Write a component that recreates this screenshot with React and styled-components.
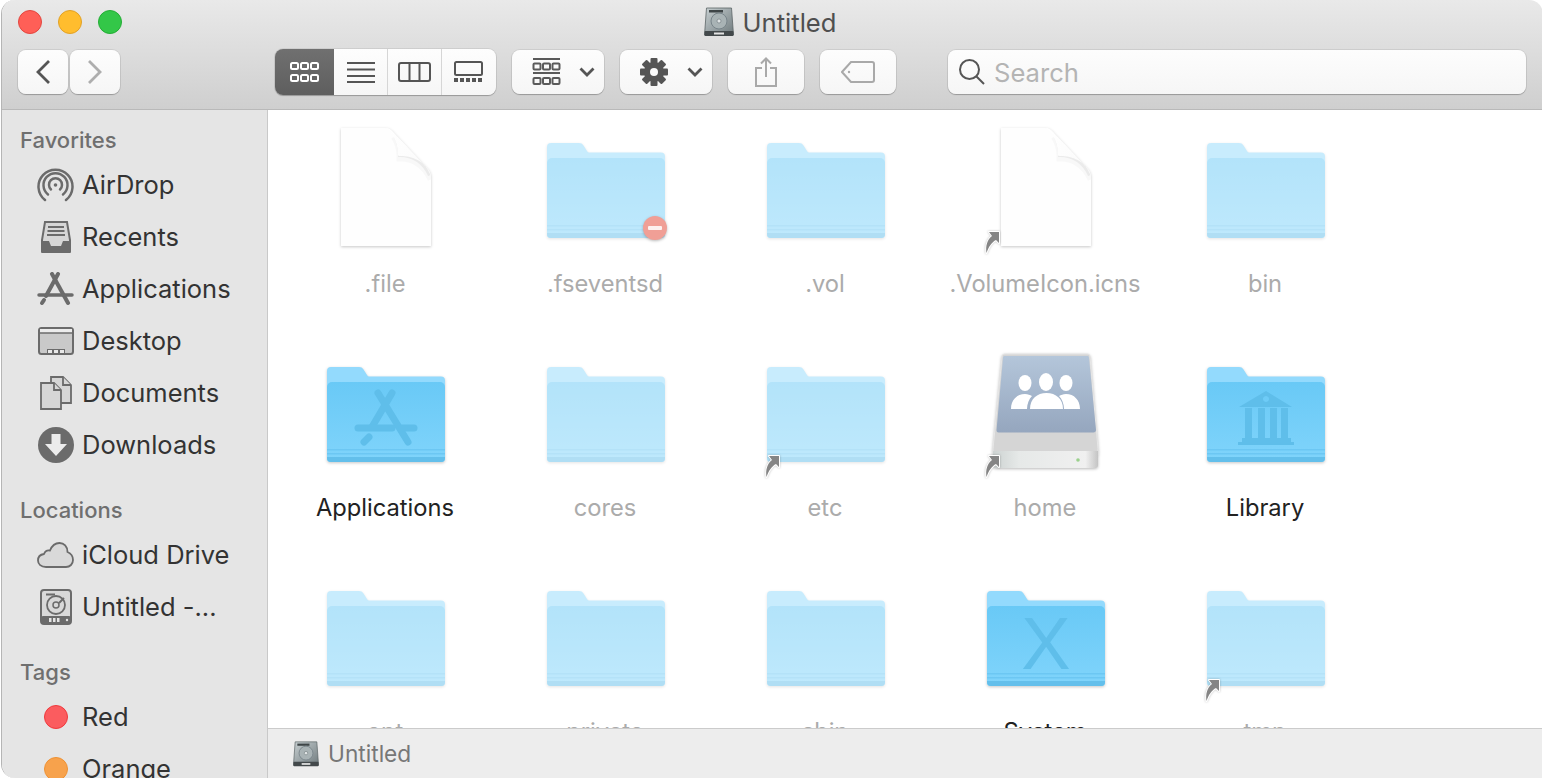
import styled, { createGlobalStyle } from "styled-components";

const GlobalStyle = createGlobalStyle`
  html, body {
    margin: 0;
    padding: 0;
    height: 100%;
    background: #fff;
    overflow: hidden;
    font-family: Inter, "Liberation Sans", sans-serif;
  }
`;

const FinderWindow = styled.div`
  box-sizing: border-box;
  width: 1542px;
  height: 778px;
  margin-left: 1px;
  display: flex;
  flex-direction: column;
  overflow: hidden;
  border-radius: 14px 14px 0 14px;
  border-left: 1px solid #b5b5b5;
  background: #fff;
`;

const Toolbar = styled.header`
  flex: none;
  height: 110px;
  box-sizing: border-box;
  border-bottom: 1px solid #b9b9b9;
  background: linear-gradient(#e9e9e9, #cfcfcf);
  display: flex;
  flex-direction: column;
`;

const TitleRow = styled.div`
  height: 44px;
  margin-bottom: 5px;
  display: flex;
  align-items: center;
  padding-left: 16px;
`;

const Lights = styled.div`
  display: flex;
  gap: 16px;
  width: 104px;
`;

const Light = styled.span`
  width: 22px;
  height: 22px;
  border-radius: 50%;
  background: ${(p) => p.$color};
  border: 1px solid ${(p) => p.$edge};
`;

const Title = styled.div`
  flex: 1;
  display: flex;
  align-items: center;
  justify-content: center;
  gap: 9px;
  padding-right: 125px;
  font-size: 25.6px;
  color: #4f4f4f;
`;

const ToolRow = styled.div`
  height: 46px;
  display: flex;
  align-items: center;
  padding-left: 16px;
`;

const ToolButton = styled.div`
  box-sizing: border-box;
  height: 44px;
  width: ${(p) => p.$width}px;
  margin-left: ${(p) => p.$gap || 0}px;
  padding-left: ${(p) => p.$pad || 0}px;
  display: flex;
  align-items: center;
  justify-content: ${(p) => (p.$pad ? "flex-start" : "center")};
  gap: ${(p) => p.$inner || 0}px;
  background: linear-gradient(#fdfdfd, #f6f6f6);
  border-radius: 8px;
  box-shadow: 0 0 0 1px rgba(0, 0, 0, 0.07), 0 1px 1px rgba(0, 0, 0, 0.22);
`;

const Segments = styled.div`
  display: flex;
  height: 46px;
  margin-left: 155px;
  border-radius: 8px;
  overflow: hidden;
  box-shadow: 0 0 0 1px rgba(0, 0, 0, 0.07), 0 1px 1px rgba(0, 0, 0, 0.22);
`;

const Segment = styled.div`
  box-sizing: border-box;
  width: ${(p) => p.$width}px;
  display: flex;
  align-items: center;
  justify-content: center;
  background: ${(p) =>
    p.$active ? "linear-gradient(#707070, #5e5e5e)" : "linear-gradient(#fdfdfd, #f6f6f6)"};
  border-left: ${(p) => (p.$divider ? "1px solid #d6d6d6" : "none")};
`;

const SearchBox = styled.div`
  box-sizing: border-box;
  width: 578px;
  height: 44px;
  margin-left: 52px;
  padding-left: 10px;
  display: flex;
  align-items: center;
  gap: 8px;
  background: linear-gradient(#fdfdfd, #f6f6f6);
  border-radius: 8px;
  box-shadow: 0 0 0 1px rgba(0, 0, 0, 0.07), 0 1px 1px rgba(0, 0, 0, 0.22);
  font-size: 25.6px;
  color: #b4b4b4;
`;

const Body = styled.div`
  flex: 1;
  min-height: 0;
  display: flex;
`;

const Sidebar = styled.aside`
  flex: none;
  box-sizing: border-box;
  width: 266px;
  padding-top: 11px;
  overflow: hidden;
  background: #e5e5e5;
  border-right: 1px solid #c9c9c9;
`;

const Section = styled.section`
  margin-bottom: 20px;
`;

const Heading = styled.div`
  height: 38px;
  padding-left: 18px;
  display: flex;
  align-items: center;
  font-size: 22px;
  font-weight: 500;
  color: #6f6f6f;
`;

const SideItem = styled.div`
  height: 52px;
  display: flex;
  align-items: center;
  padding-left: 35px;
  gap: 8px;
  font-size: 25.5px;
  color: #333;
  white-space: nowrap;
`;

const SideName = styled.span`
  margin-top: -2px;
`;

const SideIcon = styled.span`
  width: 37px;
  height: 37px;
  flex: none;
  display: flex;
  align-items: center;
  justify-content: center;
`;

const TagDot = styled.span`
  width: 22px;
  height: 22px;
  border-radius: 50%;
  background: ${(p) => p.$color};
  border: 1px solid ${(p) => p.$edge};
`;

const Content = styled.div`
  flex: 1;
  min-width: 0;
  display: flex;
  flex-direction: column;
`;

const Main = styled.main`
  flex: 1;
  min-height: 0;
  overflow: hidden;
  padding: 10px 0 0 7px;
  display: grid;
  grid-template-columns: repeat(5, 220px);
  grid-auto-rows: 224px;
`;

const Cell = styled.div`
  display: flex;
  flex-direction: column;
  align-items: center;
`;

const IconSlot = styled.div`
  position: relative;
  width: 128px;
  height: 128px;
`;

const Label = styled.div`
  margin-top: 21px;
  height: 30px;
  line-height: 30px;
  font-size: 23.7px;
  color: ${(p) => (p.$dim ? "#ababab" : "#222")};
  white-space: nowrap;
`;

const AliasBadge = styled.svg`
  position: absolute;
  left: 2px;
  top: 109px;
  filter: drop-shadow(0 0 1px rgba(0, 0, 0, 0.25));
`;

const StopBadge = styled.div`
  position: absolute;
  left: 102px;
  top: 96px;
  width: 24px;
  height: 24px;
  border-radius: 50%;
  background: #f09f96;
  box-shadow: 0 1px 3px rgba(0, 0, 0, 0.25);
  display: flex;
  align-items: center;
  justify-content: center;

  &::after {
    content: "";
    width: 14px;
    height: 4px;
    background: #fdf1ef;
    border-radius: 1px;
  }
`;

const StatusBar = styled.footer`
  flex: none;
  height: 50px;
  box-sizing: border-box;
  border-top: 1px solid #cbcbcb;
  background: #ededed;
  display: flex;
  align-items: center;
  gap: 9px;
  padding: 0 0 0 25px;
  font-size: 22.7px;
  color: #777;
`;

const stroke = "#6b6b6b";

const DiskIcon = ({ size = 30, id = "disk-top" }) => (
  <svg width={size} height={size} viewBox="0 0 30 30">
    <defs>
      <linearGradient id={id} x1="0" y1="0" x2="1" y2="1">
        <stop offset="0" stopColor="#c8d0d2" />
        <stop offset="1" stopColor="#6f7a7d" />
      </linearGradient>
    </defs>
    <path d="M2.500 1h25l2 27H.500z" fill={`url(#${id})`} stroke="#5c6466" strokeWidth="0.8" />
    <rect x="5" y="3" width="14" height="2.500" fill="#3e4547" />
    <circle cx="15" cy="14" r="8" fill="#a9b3b5" stroke="#78848a" />
    <circle cx="15" cy="14" r="2" fill="#e0e4e5" stroke="#6c7578" strokeWidth="0.6" />
    <rect x="0.500" y="24" width="29" height="5" rx="1" fill="#43494b" />
    <rect x="10" y="25.500" width="10" height="2" fill="#e3e3e3" />
  </svg>
);

const ViewIcon = ({ color }) => (
  <svg width="30" height="22" viewBox="0 0 30 22" fill="none" stroke={color} strokeWidth="2">
    {[1, 11, 21].map((x) =>
      [2, 14].map((y) => <rect key={`${x}-${y}`} x={x} y={y} width="7" height="6" rx="1.500" />)
    )}
  </svg>
);

const ListIcon = () => (
  <svg width="30" height="22" viewBox="0 0 30 22" fill="none" stroke="#555" strokeWidth="2">
    <path d="M1 2h28M1 8.500h28M1 15h28M1 21h28" />
  </svg>
);

const ColumnsIcon = () => (
  <svg width="34" height="22" viewBox="0 0 34 22" fill="none" stroke="#555" strokeWidth="2">
    <rect x="1" y="2" width="31" height="18" rx="2" />
    <path d="M11.500 2v18M21.500 2v18" />
  </svg>
);

const GalleryIcon = () => (
  <svg width="30" height="22" viewBox="0 0 30 22" fill="none">
    <rect x="1" y="1" width="27" height="13" rx="1.500" stroke="#555" strokeWidth="2" />
    {[0, 6, 12, 18, 24].map((x) => (
      <rect key={x} x={x} y="17" width="4" height="4" fill="#555" />
    ))}
  </svg>
);

const GroupIcon = () => (
  <svg width="29" height="28" viewBox="0 0 29 28" fill="none" stroke="#5a5a5a" strokeWidth="2">
    <path d="M1 1h27M1 15h27" />
    {[1.500, 11, 20.500].map((x) =>
      [5.500, 20].map((y) => <rect key={`${x}-${y}`} x={x} y={y} width="7" height="6" rx="1" />)
    )}
  </svg>
);

const Chevron = () => (
  <svg width="16" height="10" viewBox="0 0 16 10" fill="none" stroke="#555" strokeWidth="2.800">
    <path d="M1.500 1.500 8 8l6.500-6.500" />
  </svg>
);

const GearIcon = () => (
  <svg width="28" height="28" viewBox="0 0 28 28">
    {[0, 45, 90, 135].map((a) => (
      <rect key={a} x="10.500" y="0" width="7" height="28" rx="1" fill="#555" transform={`rotate(${a} 14 14)`} />
    ))}
    <circle cx="14" cy="14" r="10" fill="#555" />
    <circle cx="14" cy="14" r="4" fill="#fafafa" />
  </svg>
);

const ShareIcon = () => (
  <svg width="22" height="30" viewBox="0 0 22 30" fill="none" stroke="#a9a9a9" strokeWidth="2">
    <path d="M7 11H1v18h20V11h-6M11 20V2M6 6.500 11 1.500l5 5" />
  </svg>
);

const TagIcon = () => (
  <svg width="34" height="22" viewBox="0 0 34 22" fill="none" stroke="#a9a9a9" strokeWidth="2">
    <path d="M10 1h21a2 2 0 0 1 2 2v16a2 2 0 0 1-2 2H10L1 11z" />
    <circle cx="8" cy="11" r="1.200" fill="#a9a9a9" stroke="none" />
  </svg>
);

const SearchIcon = () => (
  <svg width="28" height="28" viewBox="0 0 28 28" fill="none" stroke="#555" strokeWidth="2">
    <circle cx="11.500" cy="11.500" r="9.500" />
    <path d="M18.500 18.500 26 26" />
  </svg>
);

const AirDropIcon = () => (
  <svg width="37" height="37" viewBox="0 0 37 37" fill="none" stroke={stroke}>
    <path d="M8 33A17 17 0 1 1 29 33" strokeWidth="2.500" strokeLinecap="round" />
    <path d="M11 27.500A12 12 0 1 1 26 27.500" strokeWidth="2.500" strokeLinecap="round" />
    <path d="M14 22.500A6.500 6.500 0 1 1 23 22.500" strokeWidth="2.500" strokeLinecap="round" />
    <circle cx="18.500" cy="18" r="1.800" fill={stroke} stroke="none" />
  </svg>
);

const RecentsIcon = () => (
  <svg width="32" height="32" viewBox="0 0 32 32">
    <path d="M5 1h22l3 18v11a1.500 1.500 0 0 1-1.500 1.500h-25A1.500 1.500 0 0 1 2 30V19z" fill="#d6d6d6" stroke={stroke} strokeWidth="2" />
    <path d="M8 6h16M7.500 10h17M7 14h18" stroke={stroke} strokeWidth="1.800" />
    <path d="M1 20h8l2 5h10l2-5h8v10a2 2 0 0 1-2 2H3a2 2 0 0 1-2-2z" fill={stroke} />
  </svg>
);

const AppsIcon = () => (
  <svg width="37" height="34" viewBox="0 0 37 34" fill="none" stroke={stroke} strokeLinecap="round">
    <path d="M15 2 31 31" strokeWidth="4" />
    <path d="M21 2 9 24" strokeWidth="4" />
    <path d="M2 23h33" strokeWidth="3.500" />
    <path d="M5 31 7 28" strokeWidth="4" />
  </svg>
);

const DesktopIcon = () => (
  <svg width="36" height="28" viewBox="0 0 36 28">
    <rect x="1" y="1" width="34" height="26" rx="2.500" fill="#c9c9c9" stroke={stroke} strokeWidth="2" />
    <rect x="2" y="2" width="32" height="4" fill="#ececec" />
    <path d="M2 6h32" stroke={stroke} strokeWidth="1.500" />
    <path d="M9 27v-5h18v5z" fill={stroke} />
    {[10, 16, 22].map((x) => (
      <rect key={x} x={x} y="23" width="4" height="3" fill="#e8e8e8" />
    ))}
  </svg>
);

const DocumentsIcon = () => (
  <svg width="32" height="34" viewBox="0 0 32 34" fill="#d6d6d6" stroke={stroke} strokeWidth="1.800">
    <path d="M11 1h12l8 8v18H11z" />
    <path d="M23 1v8h8" />
    <path d="M1 7h13l7 7v19H1z" />
    <path d="M14 7v7h7" />
  </svg>
);

const DownloadsIcon = () => (
  <svg width="36" height="36" viewBox="0 0 36 36">
    <circle cx="18" cy="18" r="18" fill={stroke} />
    <path d="M13.500 7h9v10h6.500L18 29 7 17h6.500z" fill="#ececec" />
  </svg>
);

const CloudIcon = () => (
  <svg width="37" height="26" viewBox="0 0 37 26">
    <path
      d="M9 25C4 25 1 22 1 18.500 1 15 3.500 12.500 7 12 8 9.500 10.500 8 13 8.500 15 3.500 19 1 22.500 1 27 1 30.500 4.500 30.500 10 34 11.500 36 14.500 36 18 36 22 33 25 29 25z"
      fill="#d9d9d9"
      stroke={stroke}
      strokeWidth="1.800"
    />
  </svg>
);

const DriveLineIcon = () => (
  <svg width="32" height="36" viewBox="0 0 32 36">
    <rect x="1" y="1" width="30" height="34" rx="3" fill="#d9d9d9" stroke={stroke} strokeWidth="2" />
    <rect x="6" y="4.500" width="9" height="2" fill={stroke} />
    <circle cx="16" cy="16" r="9" fill="none" stroke={stroke} strokeWidth="1.800" />
    <circle cx="16" cy="16" r="3" fill="none" stroke={stroke} strokeWidth="1.500" />
    <path d="M24 9 19 14" stroke={stroke} strokeWidth="2" />
    <rect x="1" y="27" width="30" height="8" rx="2" fill={stroke} />
    {[9, 13, 17].map((x) => (
      <rect key={x} x={x} y="29" width="2.500" height="4" fill="#e4e4e4" />
    ))}
    <circle cx="27" cy="31" r="1.200" fill="#e4e4e4" />
  </svg>
);

const FolderDefs = () => (
  <svg width="0" height="0" style={{ position: "absolute" }}>
    <defs>
      <linearGradient id="folder-front" x1="0" y1="0" x2="0" y2="1">
        <stop offset="0" stopColor="#69c9f6" />
        <stop offset="1" stopColor="#80d4fb" />
      </linearGradient>
      <linearGradient id="file-fold" x1="0" y1="0" x2="1" y2="1">
        <stop offset="0" stopColor="#ffffff" />
        <stop offset="1" stopColor="#fafafa" />
      </linearGradient>
      <linearGradient id="drive-panel" x1="0" y1="0" x2="0" y2="1">
        <stop offset="0" stopColor="#b4c6da" />
        <stop offset="1" stopColor="#95a6be" />
      </linearGradient>
      <linearGradient id="drive-front" x1="0" y1="0" x2="1" y2="0">
        <stop offset="0" stopColor="#cdd3d2" />
        <stop offset="0.25" stopColor="#e6e9e8" />
        <stop offset="0.88" stopColor="#f0f0f0" />
        <stop offset="1" stopColor="#c4c4c4" />
      </linearGradient>
      <clipPath id="file-page">
        <path d="M20 8h44c3 0 5 1 7 3l34 36c3 3 5 6 5 10v69H20z" />
      </clipPath>
    </defs>
  </svg>
);

const emblemColor = "#5fbeea";

const AppEmblem = () => (
  <g fill="none" stroke={emblemColor} strokeWidth="7" strokeLinecap="round">
    <path d="M57 49 87 98" />
    <path d="M71 49 51 83" />
    <path d="M37 84h34M81 84h12" />
    <path d="M43 98l5-5" />
  </g>
);

const LibraryEmblem = () => (
  <g fill={emblemColor}>
    <path d="M65 47 91 63H38zM65 52a3 3 0 1 0 .01 0" fillRule="evenodd" />
    {[44, 57, 69, 80].map((x) => (
      <rect key={x} x={x} y="64" width="7" height="30" />
    ))}
    <rect x="41" y="94" width="49" height="4" />
    <rect x="37" y="98" width="56" height="3" />
  </g>
);

const SystemEmblem = () => (
  <text x="65" y="101" textAnchor="middle" fontFamily="Liberation Sans, sans-serif" fontSize="74" fill={emblemColor}>
    X
  </text>
);

const Folder = ({ dim, emblem }) => (
  <svg
    width="128"
    height="128"
    viewBox="0 0 128 128"
    opacity={dim ? 0.5 : 1}
    style={{ filter: "drop-shadow(0 1px 1.5px rgba(0,0,0,.22))" }}
  >
    <path
      d="M10 23h28c2 0 3.500.8 4.500 2.500L46 31c.6 1 1.500 1.500 3 1.500h71a4 4 0 0 1 4 4V114a4 4 0 0 1-4 4H10a4 4 0 0 1-4-4V27a4 4 0 0 1 4-4z"
      fill="#93dafd"
    />
    <path d="M11 38h108a5 5 0 0 1 5 5v71a4 4 0 0 1-4 4H10a4 4 0 0 1-4-4V43a5 5 0 0 1 5-5z" fill="url(#folder-front)" />
    <rect x="6" y="105" width="118" height="1.500" fill="#6cc7f3" />
    <rect x="6" y="109" width="118" height="1.500" fill="#6cc7f3" />
    <path d="M6 113h118v1a4 4 0 0 1-4 4H10a4 4 0 0 1-4-4z" fill="#63bfeb" />
    {emblem}
  </svg>
);

const FileIcon = () => (
  <svg width="128" height="128" viewBox="0 0 128 128" style={{ filter: "drop-shadow(0 1px 1.5px rgba(0,0,0,.22))" }}>
    <path d="M20 8h44c3 0 5 1 7 3l34 36c3 3 5 6 5 10v69H20z" fill="#fefefe" />
    <g clipPath="url(#file-page)" fill="none" stroke="#000">
      <path d="M74 16c4 6 6 12 6 21 9 0 23 4 31 22" strokeOpacity="0.025" strokeWidth="9" />
      <path d="M74 16c3 6 4.500 12 4.500 19.500 9 0 22 3 30 20" strokeOpacity="0.05" strokeWidth="3" />
    </g>
    <path d="M65 8c2 0 4 1 6 3l34 36c3 3 5 6 5 10-3-11-12-20-28-21-4 0-5 0-5-1 0-11-4-21-12-27z" fill="url(#file-fold)" />
  </svg>
);

const DriveIcon = () => (
  <svg width="128" height="128" viewBox="0 0 128 128" style={{ filter: "drop-shadow(0 1px 1.5px rgba(0,0,0,.28))" }}>
    <path d="M24 10h82c2 0 3 1 3 3l8 92v6H12v-6l9-92c0-2 1-3 3-3z" fill="#d5d5d5" stroke="#e6e6e6" strokeWidth="1" />
    <path d="M24 12h82c1.500 0 2 .5 2 2l7 72c0 1.500-1 2.500-2.500 2.500h-95C16 88.500 15.500 87.500 15.500 86l6.500-72c0-1.500.5-2 2-2z" fill="url(#drive-panel)" />
    <path d="M12 107h105v13c0 3-1 4-4 4H16c-3 0-4-1-4-4z" fill="url(#drive-front)" />
    <circle cx="97" cy="116" r="1.800" fill="#9bd18d" />
    <g fill="#fff">
      <ellipse cx="44" cy="39" rx="6.500" ry="8" />
      <ellipse cx="85" cy="39" rx="6.500" ry="8" />
      <path d="M30 65c0-9 6-15 14-15 3 0 5 1 7 2-3 3-5 8-5 13z" />
      <path d="M99 65c0-9-6-15-14-15-3 0-5 1-7 2 3 3 5 8 5 13z" />
      <ellipse cx="65" cy="38" rx="7" ry="9" />
      <path d="M49 65c0-10 7-16 16.500-16S82 55 82 65z" />
    </g>
  </svg>
);

const Alias = () => (
  <AliasBadge width="20" height="26" viewBox="0 0 20 26">
    <path
      d="M6 3h10v11l-3-3c-4 2-7 6-9.500 13C2.500 17 4 11 9 7z"
      fill="#858585"
      stroke="#fff"
      strokeWidth="2"
      strokeLinejoin="round"
      paintOrder="stroke"
    />
  </AliasBadge>
);

const favorites = [
  ["AirDrop", <AirDropIcon />],
  ["Recents", <RecentsIcon />],
  ["Applications", <AppsIcon />],
  ["Desktop", <DesktopIcon />],
  ["Documents", <DocumentsIcon />],
  ["Downloads", <DownloadsIcon />],
];

const locations = [
  ["iCloud Drive", <CloudIcon />],
  ["Untitled -...", <DriveLineIcon />],
];

const tags = [
  ["Red", "#fb5c5f", "#f0393d"],
  ["Orange", "#f7a24c", "#ee9133"],
];

const items = [
  { name: ".file", kind: "file" },
  { name: ".fseventsd", stop: true },
  { name: ".vol" },
  { name: ".VolumeIcon.icns", kind: "file", alias: true },
  { name: "bin" },
  { name: "Applications", active: true, emblem: <AppEmblem /> },
  { name: "cores" },
  { name: "etc", alias: true },
  { name: "home", kind: "drive", alias: true },
  { name: "Library", active: true, emblem: <LibraryEmblem /> },
  { name: "opt" },
  { name: "private" },
  { name: "sbin" },
  { name: "System", active: true, emblem: <SystemEmblem /> },
  { name: "tmp", alias: true },
];

const ItemIcon = ({ item }) => {
  if (item.kind === "file") return <FileIcon />;
  if (item.kind === "drive") return <DriveIcon />;
  return <Folder dim={!item.active} emblem={item.emblem} />;
};

export default function App() {
  return (
    <>
      <GlobalStyle />
      <FolderDefs />
      <FinderWindow>
        <Toolbar>
          <TitleRow>
            <Lights>
              <Light $color="#ff5f57" $edge="#e2463f" />
              <Light $color="#ffbd2e" $edge="#e1a126" />
              <Light $color="#33c748" $edge="#24ad35" />
            </Lights>
            <Title>
              <DiskIcon />
              Untitled
            </Title>
          </TitleRow>
          <ToolRow>
            <ToolButton $width={50}>
              <svg width="16" height="26" viewBox="0 0 16 26" fill="none" stroke="#555" strokeWidth="2.800">
                <path d="M14 2 3 13l11 11" />
              </svg>
            </ToolButton>
            <ToolButton $width={50} $gap={2}>
              <svg width="16" height="26" viewBox="0 0 16 26" fill="none" stroke="#aeaeae" strokeWidth="2.800">
                <path d="M2 2l11 11L2 24" />
              </svg>
            </ToolButton>
            <Segments>
              <Segment $width={59} $active>
                <ViewIcon color="#fff" />
              </Segment>
              <Segment $width={53}>
                <ListIcon />
              </Segment>
              <Segment $width={54} $divider>
                <ColumnsIcon />
              </Segment>
              <Segment $width={55} $divider>
                <GalleryIcon />
              </Segment>
            </Segments>
            <ToolButton $width={92} $gap={16} $pad={20} $inner={18}>
              <GroupIcon />
              <Chevron />
            </ToolButton>
            <ToolButton $width={92} $gap={16} $pad={20} $inner={19}>
              <GearIcon />
              <Chevron />
            </ToolButton>
            <ToolButton $width={76} $gap={16}>
              <ShareIcon />
            </ToolButton>
            <ToolButton $width={76} $gap={16}>
              <TagIcon />
            </ToolButton>
            <SearchBox>
              <SearchIcon />
              Search
            </SearchBox>
          </ToolRow>
        </Toolbar>
        <Body>
          <Sidebar>
            <Section>
              <Heading>Favorites</Heading>
              {favorites.map(([name, icon]) => (
                <SideItem key={name}>
                  <SideIcon>{icon}</SideIcon>
                  <SideName>{name}</SideName>
                </SideItem>
              ))}
            </Section>
            <Section>
              <Heading>Locations</Heading>
              {locations.map(([name, icon]) => (
                <SideItem key={name}>
                  <SideIcon>{icon}</SideIcon>
                  <SideName>{name}</SideName>
                </SideItem>
              ))}
            </Section>
            <Section>
              <Heading>Tags</Heading>
              {tags.map(([name, color, edge]) => (
                <SideItem key={name}>
                  <SideIcon>
                    <TagDot $color={color} $edge={edge} />
                  </SideIcon>
                  <SideName>{name}</SideName>
                </SideItem>
              ))}
            </Section>
          </Sidebar>
          <Content>
            <Main>
              {items.map((item) => (
                <Cell key={item.name}>
                  <IconSlot>
                    <ItemIcon item={item} />
                    {item.stop && <StopBadge />}
                    {item.alias && <Alias />}
                  </IconSlot>
                  <Label $dim={!item.active}>{item.name}</Label>
                </Cell>
              ))}
            </Main>
            <StatusBar>
              <DiskIcon size={26} id="disk-status" />
              Untitled
            </StatusBar>
          </Content>
        </Body>
      </FinderWindow>
    </>
  );
}
